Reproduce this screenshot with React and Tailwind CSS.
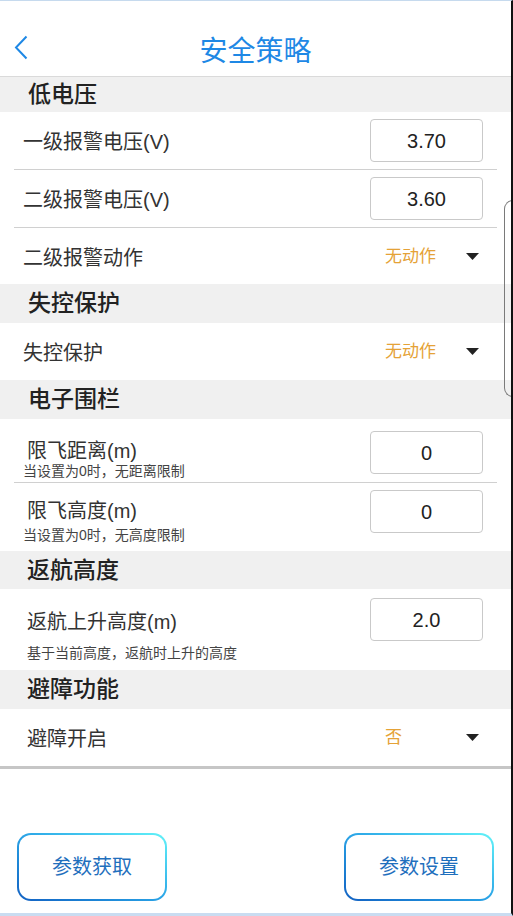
import React from 'react';

const Caret = () => (
  <svg width="13" height="7" viewBox="0 0 13 7" className="block">
    <polygon points="0,0 13,0 6.5,7" fill="#222" />
  </svg>
);

const Section = ({ title, h, pl = 'pl-[28px]' }) => (
  <div className={`bg-[#f0f0f0] flex items-center ${h} ${pl}`}>
    <span className="text-[23px] leading-none font-medium text-[#222]">{title}</span>
  </div>
);

const ValueBox = ({ value }) => (
  <div className="w-[113px] h-[43px] shrink-0 border border-[#c9c9c9] rounded-[4px] flex items-center justify-center text-[20px] text-[#222] leading-none">
    {value}
  </div>
);

const Picker = ({ value }) => (
  <div className="w-[113px] shrink-0 flex items-center justify-between pl-[15px] pr-[4px]">
    <span className="text-[17px] leading-none text-[#e5a237]">{value}</span>
    <Caret />
  </div>
);

const Line = () => <div className="mx-[14px] h-px bg-[#d0d0d0]" />;

const Row = ({ label, h, pl = 'pl-[23px]', children }) => (
  <div className={`flex items-center justify-between pr-[28px] ${h} ${pl}`}>
    <span className="text-[20px] leading-none text-[#333] pt-[3px]">{label}</span>
    {children}
  </div>
);

export default function App() {
  return (
    <div className="relative w-[513px] h-[916px] overflow-hidden bg-white flex flex-col border-t border-[#c6daee] border-b-[3px] border-b-[#c9dcf1] border-r-2 border-r-[#111] font-['Liberation_Sans','Noto_Sans_CJK_SC',sans-serif]">
      {/* header */}
      <div className="h-[76px] shrink-0 border-b border-[#dadada] pt-[26px] grid grid-cols-[1fr_auto_1fr] items-center">
        <div className="pl-[14px] -mt-[8px]">
          <svg width="14" height="25" viewBox="0 0 14 25" className="block">
            <polyline points="12.5,1.5 2,12.5 12.5,23.5" fill="none" stroke="#1e88e5" strokeWidth="2" />
          </svg>
        </div>
        <span className="text-[28px] leading-none text-[#1e88e5]">安全策略</span>
        <div />
      </div>

      <Section title="低电压" h="h-[35px]" />
      <Row label="一级报警电压(V)" h="h-[57px]">
        <ValueBox value="3.70" />
      </Row>
      <Line />
      <Row label="二级报警电压(V)" h="h-[57px]">
        <ValueBox value="3.60" />
      </Row>
      <Line />
      <Row label="二级报警动作" h="h-[56px]">
        <Picker value="无动作" />
      </Row>

      <Section title="失控保护" h="h-[39px]" />
      <Row label="失控保护" h="h-[57px]">
        <Picker value="无动作" />
      </Row>

      <Section title="电子围栏" h="h-[39px]" />
      <div className="h-[63px] flex items-start justify-between pl-[23px] pr-[28px]">
        <div className="pt-[20px]">
          <div className="pl-[4px] text-[20px] leading-[24px] text-[#333]">限飞距离(m)</div>
          <div className="text-[14px] leading-[17px] text-[#444]">当设置为0时，无距离限制</div>
        </div>
        <div className="pt-[12px]">
          <ValueBox value="0" />
        </div>
      </div>
      <Line />
      <div className="h-[68px] flex items-start justify-between pl-[23px] pr-[28px]">
        <div className="pt-[16px]">
          <div className="pl-[4px] text-[20px] leading-[24px] text-[#333]">限飞高度(m)</div>
          <div className="mt-[4px] text-[14px] leading-[17px] text-[#444]">当设置为0时，无高度限制</div>
        </div>
        <div className="pt-[7px]">
          <ValueBox value="0" />
        </div>
      </div>

      <Section title="返航高度" h="h-[38px]" pl="pl-[27px]" />
      <div className="h-[81px] flex items-start justify-between pl-[27px] pr-[28px]">
        <div className="pt-[21px]">
          <div className="text-[20px] leading-[24px] text-[#333]">返航上升高度(m)</div>
          <div className="mt-[11px] text-[14px] leading-[17px] text-[#444]">基于当前高度，返航时上升的高度</div>
        </div>
        <div className="pt-[9px]">
          <ValueBox value="2.0" />
        </div>
      </div>

      <Section title="避障功能" h="h-[39px]" pl="pl-[27px]" />
      <div className="h-[60px] shrink-0 border-b-[3px] border-[#c6c6c6] flex items-center justify-between pl-[27px] pr-[28px]">
        <span className="text-[20px] leading-none text-[#333] pt-[3px]">避障开启</span>
        <Picker value="否" />
      </div>

      <div className="flex-1" />

      {/* buttons */}
      <div className="flex justify-between px-[17px] pb-[12px]">
        {['参数获取', '参数设置'].map((t) => (
          <div
            key={t}
            className="w-[150px] h-[68px] rounded-[14px] p-[2px] bg-linear-to-tr from-[#1461c2] via-[#2aa3e6] to-[#62f3f8]"
          >
            <div className="w-full h-full rounded-[12px] bg-white flex items-center justify-center text-[20px] leading-none text-[#1f6fbd]">
              {t}
            </div>
          </div>
        ))}
      </div>

      {/* scroll indicator edge */}
      <div className="absolute left-[504px] top-[199px] w-[10px] h-[197px] border border-r-0 border-[#7a7a7a] rounded-l-[9px]" />
    </div>
  );
}
